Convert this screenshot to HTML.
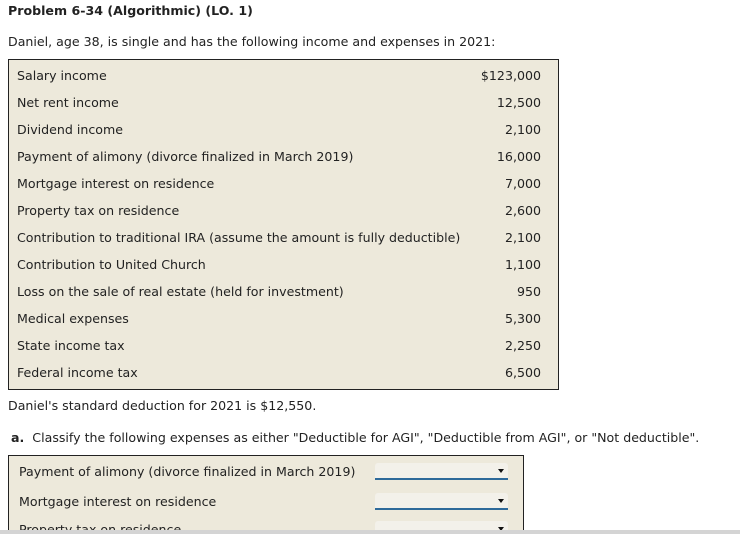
<!DOCTYPE html>
<html style="overflow:hidden;height:534px"><head><style>
body{margin:0;width:740px;height:534px;overflow:hidden;background:#fff;font-family:"DejaVu Sans","Liberation Sans",sans-serif;font-size:12.6px;color:#222;position:relative}
.a{position:absolute;white-space:nowrap}
.box{position:absolute;left:8px;top:59px;width:551px;height:331px;border:1px solid #222;background:#ede9db;box-sizing:border-box}
.r{position:absolute;left:8px;right:17px;height:16px}
.r span:last-child{position:absolute;right:0}
.box2{position:absolute;left:8px;top:455px;width:516px;height:79px;border:1px solid #222;border-bottom:none;background:#ede9db;box-sizing:border-box;overflow:hidden}
.dd{position:absolute;left:366px;width:133px;height:15px;border-bottom:2px solid #2e6a9a;background:#f3f1ea;border-radius:3px 3px 0 0}
.dd:after{content:"";position:absolute;right:4px;top:6px;border:3px solid transparent;border-top:4px solid #111}
</style></head><body>
<div class="a" style="left:8px;top:3px;font-weight:bold;">Problem 6-34 (Algorithmic) (LO. 1)</div>
<div class="a" style="left:8px;top:34px;">Daniel, age 38, is single and has the following income and expenses in 2021:</div>
<div class="box">
<div class="r" style="top:8px"><span>Salary income</span><span>$123,000</span></div>
<div class="r" style="top:35px"><span>Net rent income</span><span>12,500</span></div>
<div class="r" style="top:62px"><span>Dividend income</span><span>2,100</span></div>
<div class="r" style="top:89px"><span>Payment of alimony (divorce finalized in March 2019)</span><span>16,000</span></div>
<div class="r" style="top:116px"><span>Mortgage interest on residence</span><span>7,000</span></div>
<div class="r" style="top:143px"><span>Property tax on residence</span><span>2,600</span></div>
<div class="r" style="top:170px"><span>Contribution to traditional IRA (assume the amount is fully deductible)</span><span>2,100</span></div>
<div class="r" style="top:197px"><span>Contribution to United Church</span><span>1,100</span></div>
<div class="r" style="top:224px"><span>Loss on the sale of real estate (held for investment)</span><span>950</span></div>
<div class="r" style="top:251px"><span>Medical expenses</span><span>5,300</span></div>
<div class="r" style="top:278px"><span>State income tax</span><span>2,250</span></div>
<div class="r" style="top:305px"><span>Federal income tax</span><span>6,500</span></div>
</div>
<div class="a" style="left:8px;top:398px;">Daniel's standard deduction for 2021 is $12,550.</div>
<div class="a" style="left:11px;top:430px;"><b>a.</b>&nbsp; Classify the following expenses as either "Deductible for AGI", "Deductible from AGI", or "Not deductible".</div>
<div class="box2">
<div class="a" style="left:10px;top:8px">Payment of alimony (divorce finalized in March 2019)</div>
<div class="dd" style="top:7px"></div>
<div class="a" style="left:10px;top:38px">Mortgage interest on residence</div>
<div class="dd" style="top:37px"></div>
<div class="a" style="left:10px;top:66px">Property tax on residence</div>
<div class="dd" style="top:65px"></div>
</div>
<div style="position:absolute;left:0;top:530px;width:740px;height:4px;background:#d4d4d4"></div>
</body></html>
